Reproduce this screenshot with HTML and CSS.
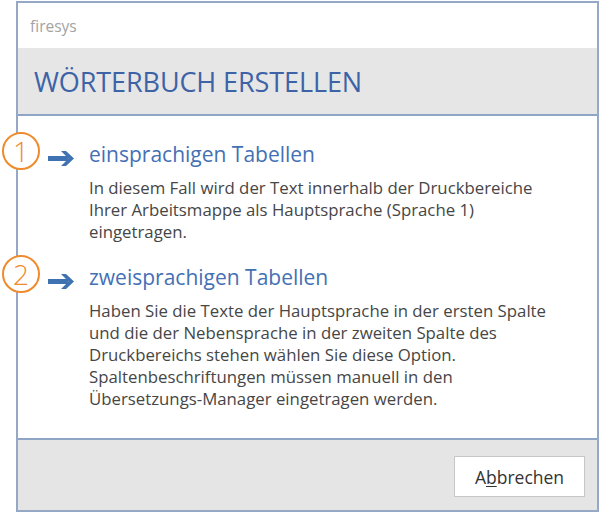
FILE: index.html
```html
<!DOCTYPE html>
<html lang="de">
<head>
<meta charset="utf-8">
<title>firesys</title>
<link rel="stylesheet" href="styles.css">
</head>
<body>
<div class="dialog">
  <div class="titlebar">firesys</div>
  <div class="header"><h1 class="title">WÖRTERBUCH ERSTELLEN</h1></div>
  <div class="content">
    <div class="option">
      <div class="option-head">
        <span class="num">1</span>
        <svg class="arrow" width="27" height="15" viewBox="0 0 27 15"><path d="M0 5H20V10H0Z" fill="#3f72b1"/><path d="M13 0H18L26 7.5L18 15H13L20.5 7.5Z" fill="#3f72b1"/></svg>
        <span class="option-title">einsprachigen Tabellen</span>
      </div>
      <p class="option-text">In diesem Fall wird der Text innerhalb der Druckbereiche<br>Ihrer Arbeitsmappe als Hauptsprache (Sprache 1)<br>eingetragen.</p>
    </div>
    <div class="option">
      <div class="option-head">
        <span class="num">2</span>
        <svg class="arrow" width="27" height="15" viewBox="0 0 27 15"><path d="M0 5H20V10H0Z" fill="#3f72b1"/><path d="M13 0H18L26 7.5L18 15H13L20.5 7.5Z" fill="#3f72b1"/></svg>
        <span class="option-title">zweisprachigen Tabellen</span>
      </div>
      <p class="option-text">Haben Sie die Texte der Hauptsprache in der ersten Spalte<br>und die der Nebensprache in der zweiten Spalte des<br>Druckbereichs stehen wählen Sie diese Option.<br>Spaltenbeschriftungen müssen manuell in den<br>Übersetzungs-Manager eingetragen werden.</p>
    </div>
  </div>
  <div class="footer">
    <button class="btn">A<u>b</u>brechen</button>
  </div>
</div>
</body>
</html>
```

FILE: styles.css
```css
* { box-sizing: border-box; }
html, body { margin: 0; padding: 0; background: #ffffff; }
body { font-family: "Open Sans", "Noto Sans", sans-serif; }

.dialog {
  margin: 1px 0 0 16px;
  width: 583px;
  height: 511px;
  border: 2px solid #95a8c5;
  display: flex;
  flex-direction: column;
  background: #fff;
}

.titlebar {
  height: 45px;
  padding-left: 12px;
  display: flex;
  align-items: center;
  font-size: 15.5px;
  color: #a3a3a3;
}

.header {
  height: 68px;
  background: #e6e6e6;
  border-bottom: 2px solid #8fa5c6;
  display: flex;
  align-items: center;
  padding-left: 16px;
}
.title {
  margin: 0;
  font-size: 27px;
  font-weight: 400;
  color: #3d63a6;
  letter-spacing: -0.1px;
}

.content {
  flex: 1;
  padding-top: 16px;
  display: flex;
  flex-direction: column;
  gap: 12.5px;
}

.option-head {
  display: flex;
  align-items: flex-start;
  margin-left: -16px;
  height: 38px;
}
.num {
  width: 38px;
  height: 38px;
  border: 2px solid #ef8b2c;
  border-radius: 50%;
  background: #fff;
  color: #ef8b2c;
  font-size: 28px;
  font-weight: 300;
  display: flex;
  align-items: center;
  justify-content: center;
  line-height: 1;
  flex: none;
}
.arrow { margin-left: 8px; margin-top: 19px; flex: none; }
.option-title {
  margin-left: 14px;
  margin-top: 8px;
  font-size: 21px;
  line-height: 28px;
  color: #4470b4;
}

.option-text {
  margin: 6.5px 0 0 71px;
  font-size: 16.8px;
  line-height: 22px;
  color: #464646;
}

.footer {
  height: 72px;
  border-top: 2px solid #8fa5c6;
  background: #e5e5e5;
  display: flex;
  justify-content: flex-end;
  padding: 16px 12px 0 0;
}
.btn {
  width: 131px;
  height: 41px;
  background: #fff;
  border: 1px solid #c6c6c6;
  font-family: "Open Sans", "Noto Sans", sans-serif;
  font-size: 17.5px;
  color: #333;
  padding: 0;
}
.btn u { text-decoration-thickness: 1px; text-underline-offset: 2px; }
```
